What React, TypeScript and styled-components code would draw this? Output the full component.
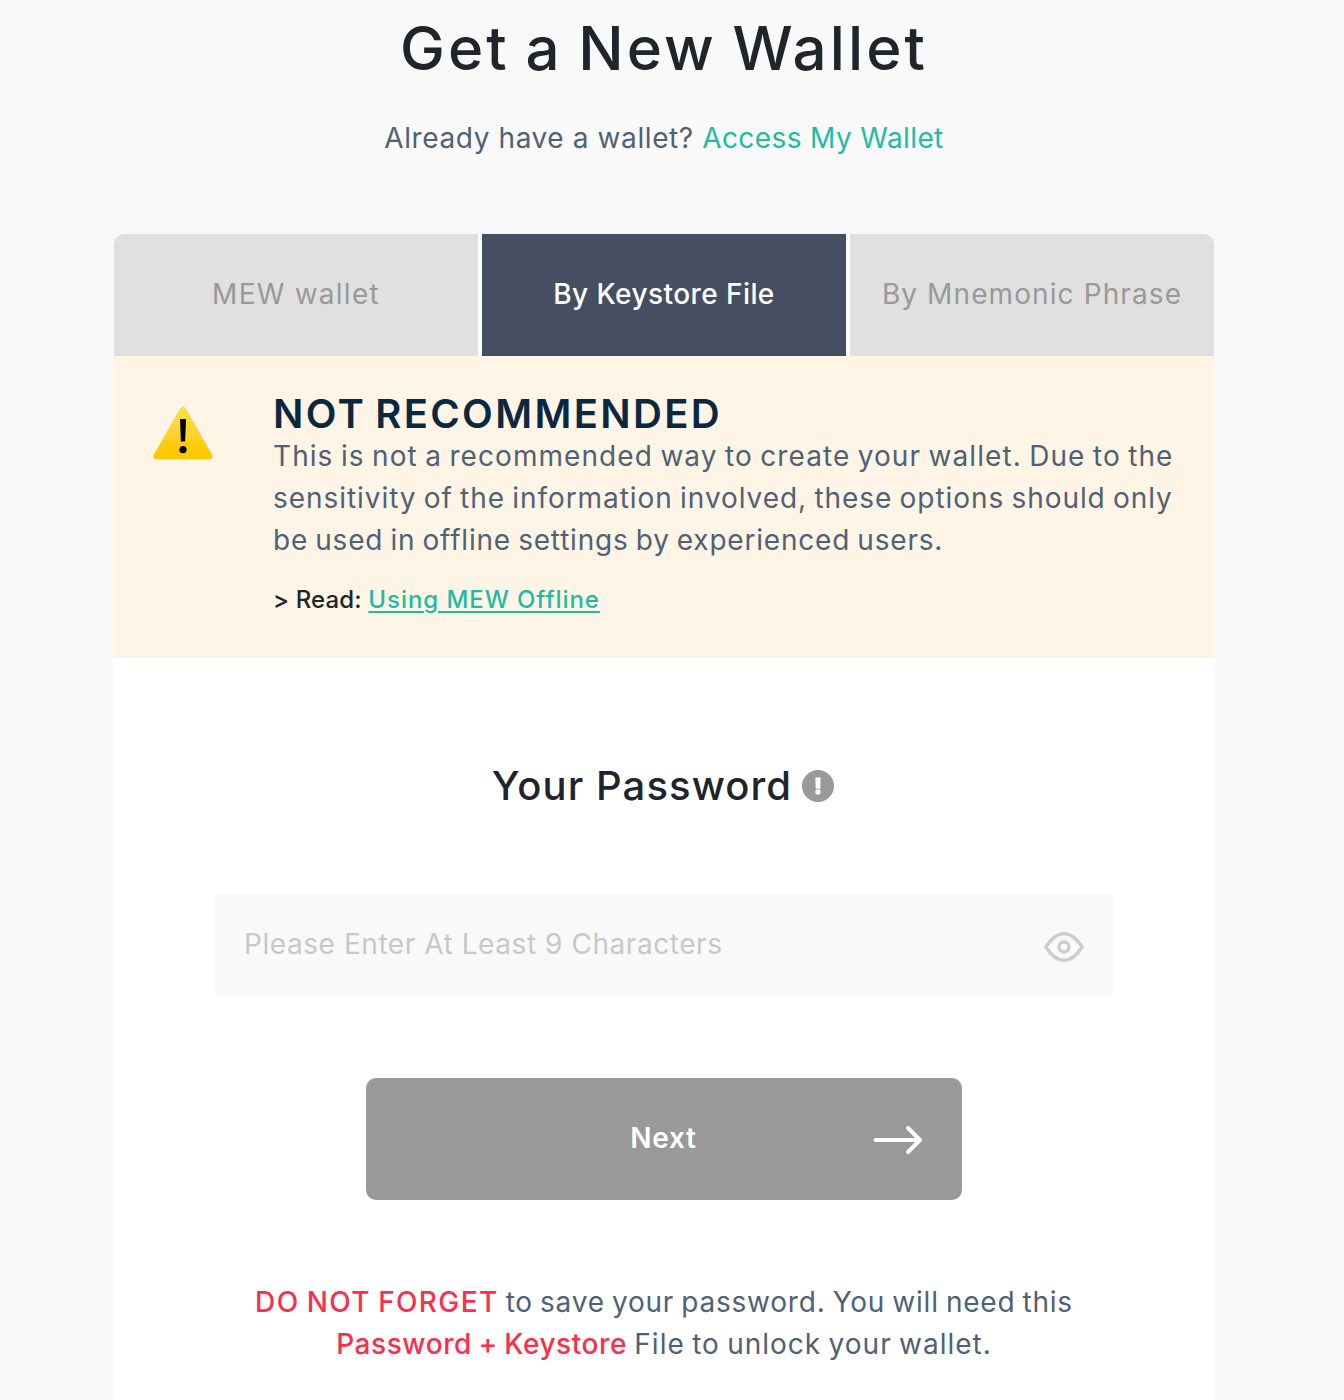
import React from 'react';
import styled, { createGlobalStyle } from 'styled-components';

const GlobalStyle = createGlobalStyle`
  * { box-sizing: border-box; }
  body {
    margin: 0;
    background: #f9f9f9;
    color: #20252b;
    font-family: Inter, "Noto Sans", sans-serif;
  }
  h1, h2, h3, p { margin: 0; font-weight: 500; }
`;

const Page = styled.main`
  width: 1328px;
  height: 1400px;
  overflow: hidden;
  display: flex;
  flex-direction: column;
  align-items: center;
`;

const Title = styled.h1`
  margin-top: 12px;
  font-size: 60px;
  line-height: 72px;
  letter-spacing: 3.1px;
  word-spacing: -3.5px;
  white-space: nowrap;
`;

const Subtitle = styled.p`
  margin-top: 33px;
  font-size: 28px;
  font-weight: 400;
  line-height: 42px;
  color: #506175;
  white-space: nowrap;
`;

const Tracked = styled.span<{ $track: number }>`
  letter-spacing: ${(p) => p.$track}px;
`;

const Link = styled.a<{ $track: number; $underline?: boolean }>`
  color: #1fbca3;
  letter-spacing: ${(p) => p.$track}px;
  text-decoration: ${(p) => (p.$underline ? 'underline' : 'none')};
  text-decoration-thickness: 2px;
  text-underline-offset: 3px;
`;

const Card = styled.section`
  width: 1100px;
  flex: 1;
  margin-top: 75px;
  background: #fff;
  border-radius: 10px 10px 0 0;
  overflow: hidden;
`;

const Tabs = styled.nav`
  display: grid;
  grid-template-columns: repeat(3, 1fr);
  gap: 4px;
  height: 122px;
`;

const Tab = styled.button<{ $active?: boolean; $track: number }>`
  border: 0;
  padding: 0 0 2px;
  background: ${(p) => (p.$active ? '#454f61' : '#e0e0e0')};
  color: ${(p) => (p.$active ? '#fff' : '#999')};
  font-family: inherit;
  font-size: 28px;
  font-weight: ${(p) => (p.$active ? 500 : 400)};
  letter-spacing: ${(p) => p.$track}px;
  white-space: nowrap;
`;

const Warning = styled.div`
  display: flex;
  height: 302px;
  padding: 36px 0 0 38px;
  background: #fff5e6;
`;

const WarningMark = styled.svg`
  width: 62px;
  height: 56px;
  margin: 13px 59px 0 0;
`;

const WarningTitle = styled.h2`
  font-size: 40px;
  font-weight: 600;
  line-height: 43px;
  letter-spacing: 2.35px;
  word-spacing: -3.5px;
  color: #0b2840;
  white-space: nowrap;
`;

const Line = styled.p<{ $track: number }>`
  font-size: 28px;
  font-weight: 400;
  line-height: 42px;
  letter-spacing: ${(p) => p.$track}px;
  word-spacing: -1.5px;
  color: #506175;
  white-space: nowrap;
`;

const ReadMore = styled.p`
  margin-top: 21px;
  font-size: 24px;
  line-height: 36px;
  white-space: nowrap;
`;

const Form = styled.form`
  display: flex;
  flex-direction: column;
  align-items: center;
`;

const FormHeading = styled.div`
  display: flex;
  align-items: center;
  gap: 10px;
  margin-top: 104px;
  padding-right: 2px;
`;

const FormTitle = styled.h3`
  font-size: 40px;
  line-height: 48px;
  letter-spacing: 1.1px;
  white-space: nowrap;
`;

const Hint = styled.svg`
  width: 32px;
  height: 32px;
`;

const Field = styled.label`
  display: flex;
  align-items: center;
  justify-content: space-between;
  width: 900px;
  height: 102px;
  margin-top: 84px;
  padding: 0 30px;
  border-radius: 8px;
  background: #f9f9f9;
`;

const PasswordInput = styled.input`
  width: 600px;
  border: 0;
  padding: 0 0 2px;
  background: transparent;
  font-family: inherit;
  font-size: 28px;
  letter-spacing: 0.56px;
  &::placeholder { color: #c8c8c8; opacity: 1; }
`;

const Eye = styled.svg`
  width: 40px;
  height: 32px;
  margin-top: 3px;
`;

const NextButton = styled.button`
  display: grid;
  grid-template-columns: 1fr auto 1fr;
  align-items: center;
  width: 596px;
  height: 122px;
  margin-top: 82px;
  padding: 0 39px;
  border: 0;
  border-radius: 10px;
  background: #999;
  color: #fff;
  font-family: inherit;
  font-size: 28px;
  font-weight: 600;
  letter-spacing: 0.7px;
`;

const NextLabel = styled.span`
  grid-column: 2;
  padding: 0 1px 2px 0;
`;

const Arrow = styled.svg`
  justify-self: end;
  width: 50px;
  height: 32px;
  margin-top: 2px;
`;

const Notice = styled.div`
  margin-top: 81px;
  text-align: center;
`;

const Strong = styled.strong<{ $track: number }>`
  color: #fb2f4d;
  font-weight: 500;
  letter-spacing: ${(p) => p.$track}px;
`;

export default function App() {
  return (
    <>
      <GlobalStyle />
      <Page>
        <Title>Get a New Wallet</Title>
        <Subtitle>
          <Tracked $track={0.6}>Already have a wallet? </Tracked>
          <Link $track={0.4}>Access My Wallet</Link>
        </Subtitle>
        <Card>
          <Tabs>
            <Tab $track={1.25}>MEW wallet</Tab>
            <Tab $active $track={0.43}>By Keystore File</Tab>
            <Tab $track={1.1}>By Mnemonic Phrase</Tab>
          </Tabs>
          <Warning>
            <WarningMark viewBox="0 0 62 56">
              <defs>
                <linearGradient id="amber" x1="0" y1="0" x2="0" y2="1">
                  <stop offset="0" stopColor="#ffdf43" />
                  <stop offset="0.55" stopColor="#ffd22b" />
                  <stop offset="0.75" stopColor="#ffca08" />
                  <stop offset="1" stopColor="#ffc800" />
                </linearGradient>
              </defs>
              <path
                d="M28.4 3.8Q31 .4 33.6 3.8L59.9 49.8Q61.6 54 57.6 54H4.4Q.4 54 2.1 49.8Z"
                fill="url(#amber)"
                stroke="#f6c02a"
                strokeWidth="0.5"
              />
              <path d="M28 14H34L33.1 36.5H28.9Z" fill="#000" />
              <circle cx="31" cy="44.7" r="3.6" fill="#000" />
            </WarningMark>
            <div>
              <WarningTitle>NOT RECOMMENDED</WarningTitle>
              <Line $track={1.07}>This is not a recommended way to create your wallet. Due to the</Line>
              <Line $track={0.94}>sensitivity of the information involved, these options should only</Line>
              <Line $track={0.8}>be used in offline settings by experienced users.</Line>
              <ReadMore>
                <Tracked $track={0.15}>&gt; Read: </Tracked>
                <Link $track={0.94} $underline>Using MEW Offline</Link>
              </ReadMore>
            </div>
          </Warning>
          <Form>
            <FormHeading>
              <FormTitle>Your Password</FormTitle>
              <Hint viewBox="0 0 32 32">
                <circle cx="16" cy="16" r="16" fill="#999" />
                <path d="M13.4 7.5H18.6L18.3 18.8H13.7Z" fill="#fff" />
                <circle cx="16" cy="22" r="2.7" fill="#fff" />
              </Hint>
            </FormHeading>
            <Field>
              <PasswordInput placeholder="Please Enter At Least 9 Characters" />
              <Eye viewBox="0 0 40 32" fill="none" stroke="#cdcdcd" strokeWidth="3.4">
                <path
                  d="M1.8 16C6 9.5 12 2.6 20 2.6S34 9.5 38.2 16C34 22.5 28 29.4 20 29.4S6 22.5 1.8 16Z"
                  strokeLinejoin="round"
                />
                <circle cx="20" cy="16" r="5" />
              </Eye>
            </Field>
            <NextButton type="button">
              <NextLabel>Next</NextLabel>
              <Arrow
                viewBox="0 0 50 32"
                fill="none"
                stroke="#fff"
                strokeWidth="4"
                strokeLinecap="round"
                strokeLinejoin="round"
              >
                <path d="M2.5 16H47M35 4L47 16L35 28" />
              </Arrow>
            </NextButton>
            <Notice>
              <Line $track={0.78}>
                <Strong $track={1.35}>DO NOT FORGET</Strong> to save your password. You will need this
              </Line>
              <Line $track={1}>
                <Strong $track={0.57}>Password + Keystore</Strong> File to unlock your wallet.
              </Line>
            </Notice>
          </Form>
        </Card>
      </Page>
    </>
  );
}
